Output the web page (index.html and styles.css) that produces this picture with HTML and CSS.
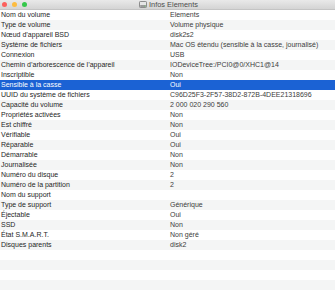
FILE: index.html
```html
<!DOCTYPE html>
<html lang="fr">
<head>
<meta charset="utf-8">
<title>Infos Elements</title>
<link rel="stylesheet" href="styles.css">
</head>
<body>
<div class="window">
  <div class="titlebar">
    <div class="lights">
      <span class="light red"></span>
      <span class="light yellow"></span>
      <span class="light green"></span>
    </div>
    <div class="title">
      <svg class="disk" width="8" height="7" viewBox="0 0 8 7">
        <rect x="0.5" y="0.5" width="7" height="6" rx="0.8" fill="#e6e6e6" stroke="#777" stroke-width="0.8"/>
        <rect x="1.2" y="4" width="5.6" height="2" fill="#9a9a9a"/>
        <circle cx="6" cy="5" r="0.5" fill="#4fd04f"/>
      </svg>
      <span>Infos Elements</span>
    </div>
  </div>
  <div class="list">
    <div class="row"><span class="k">Nom du volume</span><span class="v">Elements</span></div>
    <div class="row"><span class="k">Type de volume</span><span class="v">Volume physique</span></div>
    <div class="row"><span class="k">Nœud d’appareil BSD</span><span class="v">disk2s2</span></div>
    <div class="row"><span class="k">Système de fichiers</span><span class="v">Mac OS étendu (sensible à la casse, journalisé)</span></div>
    <div class="row"><span class="k">Connexion</span><span class="v">USB</span></div>
    <div class="row"><span class="k">Chemin d’arborescence de l’appareil</span><span class="v">IODeviceTree:/PCI0@0/XHC1@14</span></div>
    <div class="row"><span class="k">Inscriptible</span><span class="v">Non</span></div>
    <div class="row selected"><span class="k">Sensible à la casse</span><span class="v">Oui</span></div>
    <div class="row"><span class="k">UUID du système de fichiers</span><span class="v">C96D25F3-2F57-38D2-872B-4DEE21318696</span></div>
    <div class="row"><span class="k">Capacité du volume</span><span class="v">2 000 020 290 560</span></div>
    <div class="row"><span class="k">Propriétés activées</span><span class="v">Non</span></div>
    <div class="row"><span class="k">Est chiffré</span><span class="v">Non</span></div>
    <div class="row"><span class="k">Vérifiable</span><span class="v">Oui</span></div>
    <div class="row"><span class="k">Réparable</span><span class="v">Oui</span></div>
    <div class="row"><span class="k">Démarrable</span><span class="v">Non</span></div>
    <div class="row"><span class="k">Journalisée</span><span class="v">Non</span></div>
    <div class="row"><span class="k">Numéro du disque</span><span class="v">2</span></div>
    <div class="row"><span class="k">Numéro de la partition</span><span class="v">2</span></div>
    <div class="row"><span class="k">Nom du support</span><span class="v"></span></div>
    <div class="row"><span class="k">Type de support</span><span class="v">Générique</span></div>
    <div class="row"><span class="k">Éjectable</span><span class="v">Oui</span></div>
    <div class="row"><span class="k">SSD</span><span class="v">Non</span></div>
    <div class="row"><span class="k">État S.M.A.R.T.</span><span class="v">Non géré</span></div>
    <div class="row"><span class="k">Disques parents</span><span class="v">disk2</span></div>
    <div class="row"></div>
    <div class="row"></div>
    <div class="row"></div>
    <div class="row"></div>
    <div class="row"></div>
    <div class="row"></div>
  </div>
</div>
</body>
</html>
```
FILE: styles.css
```css
html, body {
  margin: 0;
  padding: 0;
  background: #ffffff;
}
.window {
  width: 335px;
  height: 300px;
  overflow: hidden;
  font-family: "Liberation Sans", Arial, sans-serif;
  font-size: 7px;
}
.titlebar {
  height: 10px;
  box-sizing: border-box;
  background: linear-gradient(#e9e9e9, #d4d4d4);
  border-bottom: 1px solid #c4c4c4;
  display: flex;
  align-items: center;
  position: relative;
}
.lights {
  display: flex;
  gap: 5px;
  padding-left: 2px;
}
.light {
  width: 5px;
  height: 5px;
  border-radius: 50%;
  display: block;
}
.red { background: #fc605c; }
.yellow { background: #fdbc40; }
.green { background: #34c84a; }
.title {
  position: absolute;
  left: 0;
  right: 0;
  top: 0;
  bottom: 0;
  display: flex;
  align-items: center;
  justify-content: center;
  gap: 2px;
  color: #4d4d4d;
  font-size: 7.4px;
  padding-left: 2px;
}
.disk { display: block; }
.list {
  display: flex;
  flex-direction: column;
}
.row {
  height: 10px;
  line-height: 10px;
  display: flex;
  color: #262626;
  white-space: nowrap;
}
.row:nth-child(even) {
  background: #f4f5f5;
}
.k {
  width: 169px;
  padding-left: 1px;
  box-sizing: border-box;
  overflow: hidden;
}
.v {
  padding-left: 1px;
  color: #3c3c3c;
}
.row.selected {
  background: #1b62d4;
  color: #ffffff;
}
.row.selected .v {
  color: #ffffff;
}
```
